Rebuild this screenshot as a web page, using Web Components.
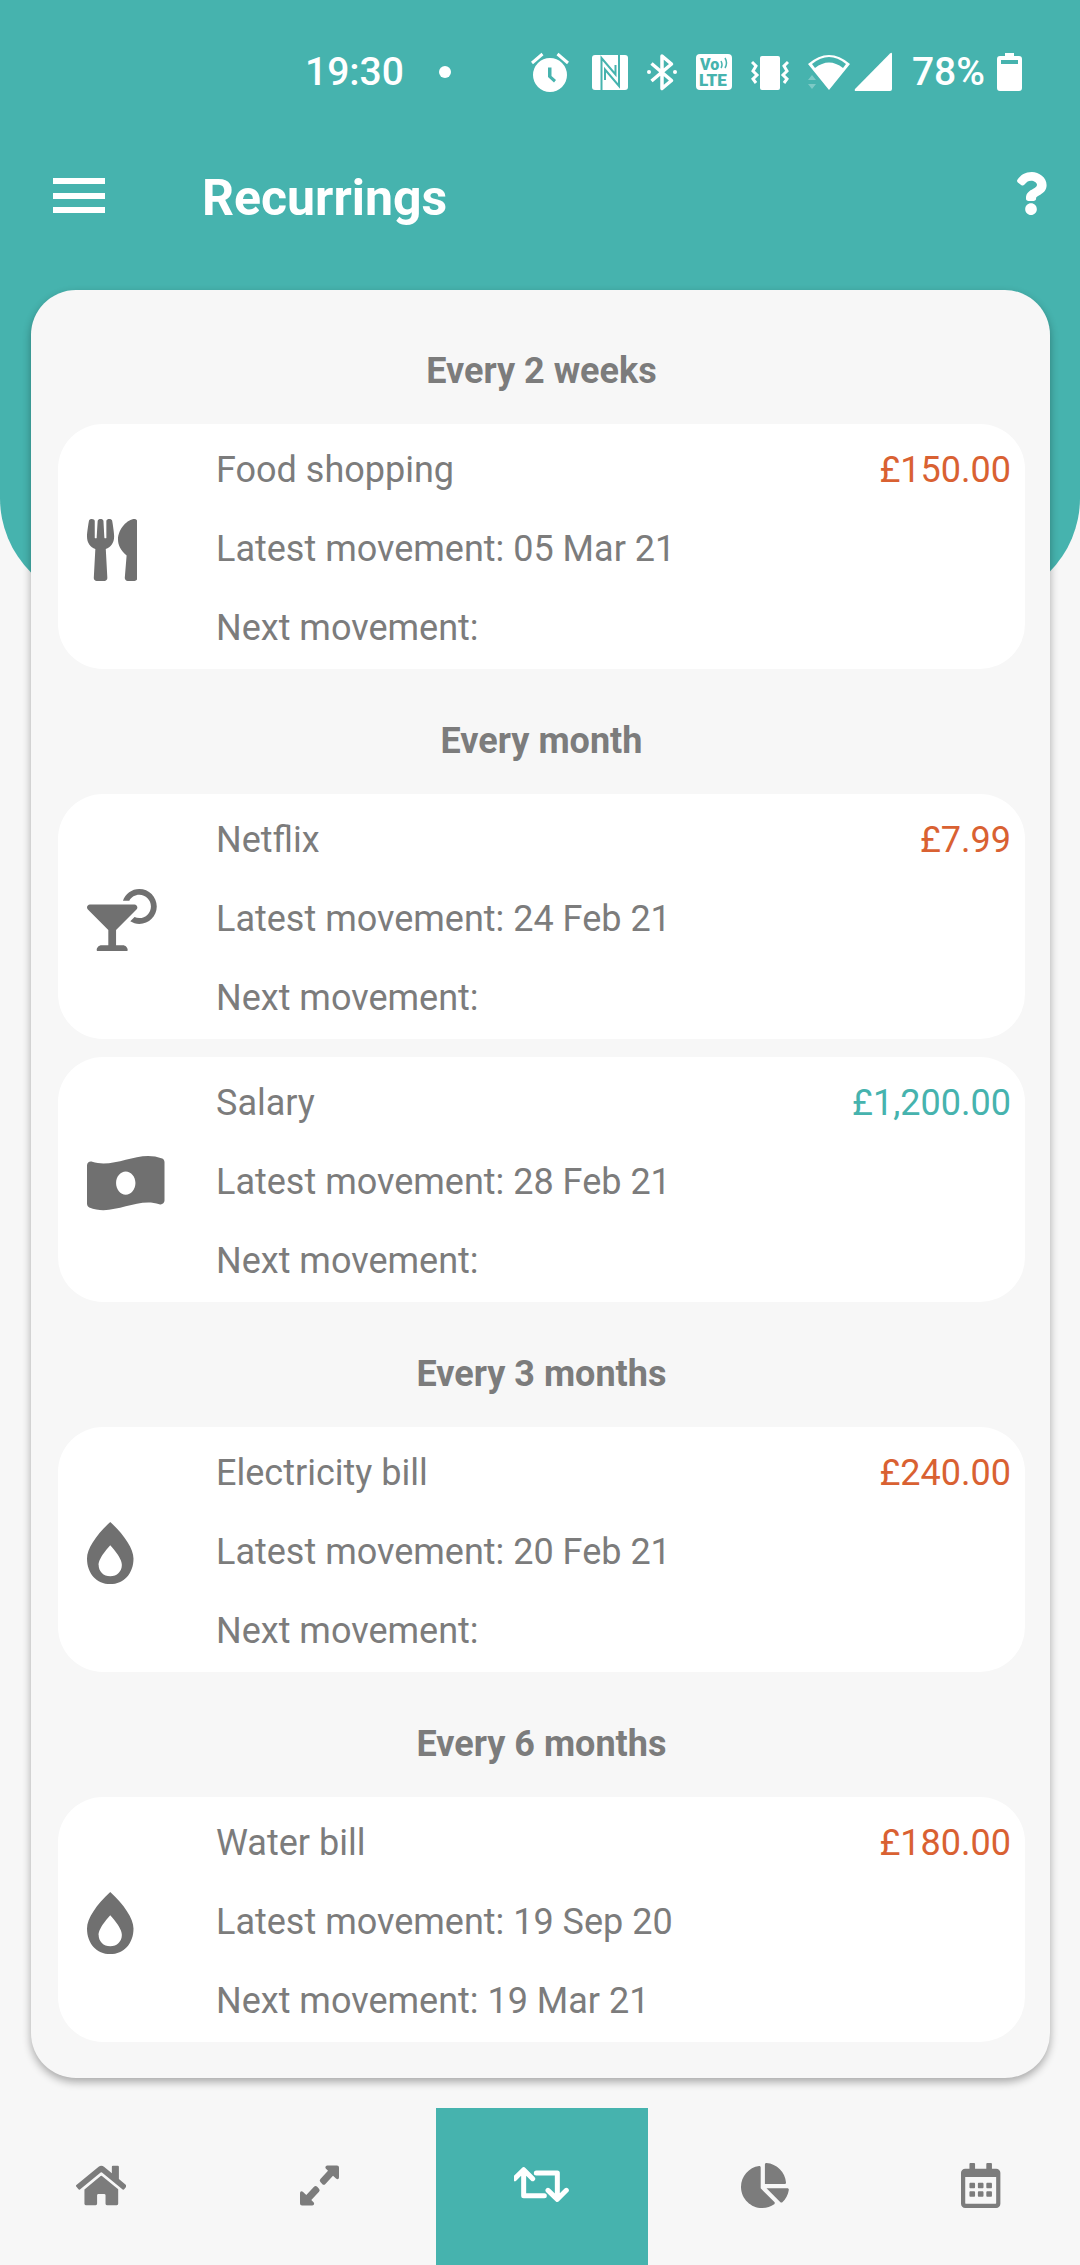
<!DOCTYPE html>
<html lang="en">
<head>
<meta charset="utf-8">
<meta name="viewport" content="width=device-width, initial-scale=1">
<title>Recurrings</title>
<style>
  :root {
    --teal: #46b3ae;
    --page: #f7f7f7;
    --ink: #7c7c7c;
    --glyph: #707070;
    --expense: #d96132;
  }
  body { margin: 0; background: var(--page); color: var(--ink); font: 36px/43px Roboto, "Liberation Sans", sans-serif; }
</style>
</head>
<body>
<app-shell>
  <status-bar slot="top" time="19:30" battery="78%"></status-bar>
  <app-header slot="top">Recurrings</app-header>
  <recurring-panel>
    <recurring-group heading="Every 2 weeks">
      <recurring-item icon="utensils" kind="expense" name="Food shopping" amount="£150.00" latest="05 Mar 21"></recurring-item>
    </recurring-group>
    <recurring-group heading="Every month">
      <recurring-item icon="cocktail" kind="expense" name="Netflix" amount="£7.99" latest="24 Feb 21"></recurring-item>
      <recurring-item icon="money" kind="income" name="Salary" amount="£1,200.00" latest="28 Feb 21"></recurring-item>
    </recurring-group>
    <recurring-group heading="Every 3 months">
      <recurring-item icon="burn" kind="expense" name="Electricity bill" amount="£240.00" latest="20 Feb 21"></recurring-item>
    </recurring-group>
    <recurring-group heading="Every 6 months">
      <recurring-item icon="burn" kind="expense" name="Water bill" amount="£180.00" latest="19 Sep 20" next="19 Mar 21"></recurring-item>
    </recurring-group>
  </recurring-panel>
  <bottom-nav slot="bottom"></bottom-nav>
</app-shell>

<script>
const define = (name, render) => customElements.define(name, class extends HTMLElement {
  constructor() { super(); this.attachShadow({ mode: 'open' }); }
  connectedCallback() { this.shadowRoot.innerHTML = render(this); }
});

/* Each glyph: viewBox, then its markup. Height comes from --icon-height. */
const GLYPHS = {
  utensils: ['0 0 416 512', '<path d="M207.9 15.2c.8 4.7 16.1 94.5 16.1 128.8 0 52.3-27.8 89.6-68.9 104.6L168 486.7c.7 13.7-10.2 25.3-24 25.3H80c-13.7 0-24.7-11.5-24-25.3l12.9-238.1C27.7 233.6 0 196.2 0 144 0 109.6 15.3 19.9 16.1 15.2 19.3-5.1 61.4-5.4 64 16.3v141.2c1.3 3.4 15.1 3.2 16 0 1.4-25.3 7.9-139.2 8-141.8 3.3-20.8 44.7-20.8 47.9 0 .2 2.7 6.6 116.5 8 141.8.9 3.2 14.8 3.4 16 0V16.3c2.6-21.6 44.8-21.4 48-1.1zm119.2 285.7l-15 185.1c-1.2 14 9.9 26 23.9 26h56c13.3 0 24-10.7 24-24V24c0-13.2-10.7-24-24-24-82.5 0-221.4 178.5-64.9 300.9z"/>'],
  cocktail: ['0 0 576 512', '<path d="M296 464h-56V338.78l168.74-168.73c15.52-15.52 4.53-42.05-17.42-42.05H24.68c-21.95 0-32.94 26.53-17.42 42.05L176 338.78V464h-56c-22.09 0-40 17.91-40 40 0 4.42 3.58 8 8 8h240c4.42 0 8-3.58 8-8 0-22.09-17.91-40-40-40zM432 0c-62.61 0-115.35 40.2-135.18 96h52.54c16.65-28.55 47.27-48 82.64-48 52.93 0 96 43.06 96 96s-43.07 96-96 96c-14.04 0-27.29-3.2-39.32-8.64l-35.26 35.26C379.23 279.92 404.59 288 432 288c79.53 0 144-64.47 144-144S511.53 0 432 0z"/>'],
  money: ['0 0 640 512', '<path d="M621.16 54.46C582.37 38.19 543.55 32 504.75 32c-123.17-.01-246.33 62.34-369.5 62.34-30.89 0-61.76-3.92-92.65-13.72-3.47-1.1-6.95-1.62-10.35-1.62C15.04 79 0 92.32 0 110.81v317.26c0 12.63 7.23 24.6 18.84 29.46C57.63 473.81 96.45 480 135.25 480c123.17 0 246.34-62.35 369.51-62.35 30.89 0 61.76 3.92 92.65 13.72 3.47 1.1 6.95 1.62 10.35 1.62 17.21 0 32.25-13.32 32.25-31.81V83.93c-.01-12.64-7.24-24.6-18.85-29.47zM320 352c-44.19 0-80-42.99-80-96 0-53.02 35.82-96 80-96s80 42.98 80 96c0 53.03-35.83 96-80 96z"/>'],
  burn: ['0 0 384 512', '<path d="M192 0C79.7 101.3 0 220.9 0 300.5 0 425 79 512 192 512s192-87 192-211.5c0-79.9-80.2-199.6-192-300.5zm0 448c-56.5 0-96-39-96-94.8 0-13.5 4.6-61.5 96-161.2 91.5 99.7 96 147.7 96 161.2 0 55.8-39.5 94.8-96 94.8z"/>'],
  question: ['25 0 354 512', '<path d="M202.021 0C122.202 0 70.503 32.703 29.914 91.026c-7.363 10.58-5.093 25.086 5.178 32.874l43.138 32.709c10.373 7.865 25.132 6.026 33.253-4.148 25.049-31.381 43.63-49.449 82.757-49.449 30.764 0 68.816 19.799 68.816 49.631 0 22.552-18.617 34.134-48.993 51.164-35.423 19.86-82.299 44.576-82.299 106.405V320c0 13.255 10.745 24 24 24h72.471c13.255 0 24-10.745 24-24v-5.773c0-42.86 125.268-44.645 125.268-160.627C377.504 66.256 286.902 0 202.021 0zM192 373.459c-38.196 0-69.271 31.075-69.271 69.271 0 38.195 31.075 69.27 69.271 69.27s69.271-31.075 69.271-69.27-31.075-69.271-69.271-69.271z"/>'],
  menu: ['0 0 52 46', '<path d="M0 5h52v6H0zM0 20h52v6H0zM0 34h52v6H0z"/>'],
  home: ['0 0 576 512', '<path d="M280.37 148.26L96 300.11V464a16 16 0 0 0 16 16l112.06-.29a16 16 0 0 0 15.92-16V368a16 16 0 0 1 16-16h64a16 16 0 0 1 16 16v95.64a16 16 0 0 0 16 16.05L464 480a16 16 0 0 0 16-16V300L295.67 148.26a12.19 12.19 0 0 0-15.3 0zM571.6 251.47L488 182.56V44.05a12 12 0 0 0-12-12h-56a12 12 0 0 0-12 12v72.61L318.47 43a48 48 0 0 0-61 0L4.34 251.47a12 12 0 0 0-1.6 16.9l25.5 31A12 12 0 0 0 45.15 301l235.22-193.74a12.19 12.19 0 0 1 15.3 0L530.9 301a12 12 0 0 0 16.9-1.6l25.5-31a12 12 0 0 0-1.7-16.93z"/>'],
  expand: ['0 0 39 45', '<path d="M28 2.500h9a2 2 0 0 1 2 2v9.500c0 2.200-1.500 2.900-3 1.500l-3-2.800-7.600 8.300a2.200 2.200 0 0 1-3.200 0l-1.800-2a2.200 2.200 0 0 1 0-3L28 7.800l-2-2c-1.300-1.400-.400-3.300 2-3.300zM11.500 42.500H2a2 2 0 0 1-2-2v-10c0-2.200 1.700-2.800 3.100-1.500L6.300 32l7.700-8.200a2.200 2.200 0 0 1 3.200 0l1.800 2a2.200 2.200 0 0 1 0 3L11.300 37l2.200 2.200c1.400 1.500.4 3.300-2 3.300z"/>'],
  repeat: ['26 27 168 135', '<path fill="none" stroke="currentColor" stroke-width="15" stroke-linecap="round" stroke-linejoin="round" d="M28 74l27-27 27 27M55 50v75h62M93 57h63v77M128 109l28 27 27-27"/>'],
  pie: ['0 0 544 512', '<path d="M527.79 288H290.5l158.03 158.03c6.04 6.04 15.98 6.53 22.19.68 38.7-36.46 65.32-85.61 73.13-140.86 1.34-9.46-6.51-17.85-16.06-17.85zm-15.83-64.8C503.72 103.74 408.26 8.28 288.8.04 279.68-.59 272 7.1 272 16.24V240h223.77c9.14 0 16.82-7.68 16.19-16.8zM224 288V50.71c0-9.55-8.39-17.4-17.84-16.06C86.99 51.49-4.1 155.6.14 280.37 4.5 408.51 114.83 513.59 243.03 511.98c50.4-.63 96.97-16.87 135.26-44.03 7.9-5.6 8.42-17.23 1.57-24.08L224 288z"/>'],
  calendar: ['0 0 448 512', '<path d="M148 288h-40c-6.600 0-12-5.400-12-12v-40c0-6.600 5.400-12 12-12h40c6.600 0 12 5.400 12 12v40c0 6.600-5.400 12-12 12zm108-12v-40c0-6.600-5.400-12-12-12h-40c-6.600 0-12 5.400-12 12v40c0 6.600 5.400 12 12 12h40c6.600 0 12-5.400 12-12zm96 0v-40c0-6.600-5.400-12-12-12h-40c-6.600 0-12 5.400-12 12v40c0 6.600 5.400 12 12 12h40c6.600 0 12-5.400 12-12zm-96 96v-40c0-6.600-5.400-12-12-12h-40c-6.600 0-12 5.400-12 12v40c0 6.600 5.400 12 12 12h40c6.600 0 12-5.400 12-12zm-96 0v-40c0-6.600-5.400-12-12-12h-40c-6.600 0-12 5.400-12 12v40c0 6.600 5.400 12 12 12h40c6.600 0 12-5.400 12-12zm192 0v-40c0-6.600-5.400-12-12-12h-40c-6.600 0-12 5.400-12 12v40c0 6.600 5.400 12 12 12h40c6.600 0 12-5.400 12-12zm96-260v352c0 26.500-21.500 48-48 48H48c-26.500 0-48-21.500-48-48V112c0-26.500 21.500-48 48-48h48V12c0-6.600 5.400-12 12-12h40c6.600 0 12 5.400 12 12v52h128V12c0-6.600 5.400-12 12-12h40c6.600 0 12 5.400 12 12v52h48c26.500 0 48 21.500 48 48zm-48 346V160H48v298c0 3.300 2.700 6 6 6h340c3.300 0 6-2.700 6-6z"/>'],
  /* status glyphs are drawn in pixels on a 40px tall canvas */
  alarm: ['0 0 43 40', '<path fill-rule="evenodd" d="M20 6a17 17 0 1 1 0 34 17 17 0 0 1 0-34zm-2 9.500v9.500l6 5.500 2-2.500-4.500-4v-8.500z"/><path d="M2 11L12.500 2M38 11L27.500 2" stroke="currentColor" stroke-width="3"/>'],
  nfc: ['0 0 36 40', '<rect y="3" width="36" height="35" rx="3"/><path d="M9.500 38V6l14 16.500V13M27 3v31L13 17.500V28" fill="none" stroke="#46b3ae" stroke-width="2"/>'],
  bluetooth: ['0 0 30 40', '<path d="M4.500 11.500l20 17-9.500 8V4l9.500 8-20 17" fill="none" stroke="currentColor" stroke-width="3.500" stroke-linejoin="round"/><circle cx="2" cy="20" r="2"/><circle cx="28" cy="20" r="2"/>'],
  volte: ['0 0 36 40', '<rect y="2" width="36" height="36" rx="4"/><g fill="#46b3ae" font-family="Roboto, sans-serif" font-weight="900"><text x="4" y="18" font-size="16">Vo</text><text x="3" y="34" font-size="17">LTE</text></g><path d="M25 9q2 4 0 7M29 6q3 5 0 10" fill="none" stroke="#46b3ae" stroke-width="1.500"/>'],
  vibrate: ['0 0 38 40', '<rect x="9" y="4" width="20" height="34" rx="2"/><path d="M1 10l4 4-3 5 4 4-4 4 3 4M37 10l-4 4 3 5-4 4 4 4-3 4" fill="none" stroke="currentColor" stroke-width="3"/>'],
  wifi: ['0 0 42 40', '<path fill-rule="evenodd" d="M0 12q21-18 42 0L21 38zM4 12l3 4q14-11 28 0l3-4Q21-2 4 12z"/><path opacity=".3" d="M0 28h8l-4-5zM0 32h8l-4 5z"/>'],
  signal: ['0 0 39 40', '<path d="M36 1.500Q38 0 38 2v35q0 2-2 2H2q-2 0-1-2z"/>'],
  battery: ['0 0 25 40', '<path fill-rule="evenodd" d="M8 1h9v3h5a3 3 0 0 1 3 3v29a3 3 0 0 1-3 3H3a3 3 0 0 1-3-3V7a3 3 0 0 1 3-3h5zM4 8v4h17V8z"/>']
};

define('app-icon', el => {
  const [box, body] = GLYPHS[el.getAttribute('name')];
  return `<style>
    :host { display: block; flex: none; }
    svg { display: block; height: var(--icon-height, 40px); width: auto; fill: currentColor; }
  </style><svg viewBox="${box}" aria-hidden="true">${body}</svg>`;
});

define('app-shell', () => `<style>
    :host { display: flex; flex-direction: column; min-height: 100vh; }
    .top { background: var(--teal); color: #fff; padding-bottom: 355px; border-radius: 0 0 105px 105px; }
    main { flex: 1; margin: -313px 30px 30px 31px; display: flex; flex-direction: column; }
  </style>
  <div class="top"><slot name="top"></slot></div>
  <main><slot></slot></main>
  <slot name="bottom"></slot>`);

define('status-bar', el => `<style>
    :host { display: flex; align-items: center; height: 144px; padding: 0 58px 0 305px; font-size: 39px; font-weight: 500; }
    .dot { width: 12px; height: 12px; border-radius: 50%; background: currentColor; margin-left: 35px; }
    .icons { margin-left: auto; display: flex; align-items: center; gap: 19px; }
    .pair { display: flex; align-items: center; gap: 4px; }
    .power { display: flex; align-items: center; gap: 12px; }
  </style>
  <time>${el.getAttribute('time')}</time><span class="dot"></span>
  <div class="icons">
    <app-icon name="alarm"></app-icon><app-icon name="nfc"></app-icon><app-icon name="bluetooth"></app-icon>
    <app-icon name="volte"></app-icon><app-icon name="vibrate"></app-icon>
    <div class="pair"><app-icon name="wifi"></app-icon><app-icon name="signal"></app-icon></div>
    <div class="power"><span>${el.getAttribute('battery')}</span><app-icon name="battery"></app-icon></div>
  </div>`);

define('app-header', () => `<style>
    :host { display: flex; align-items: center; height: 104px; padding: 0 33px 0 53px; }
    button { border: 0; padding: 0; background: none; color: inherit; cursor: pointer; }
    h1 { flex: 1; margin: 0 0 0 97px; padding-top: 4px; font-size: 50px; line-height: 60px; font-weight: 700; }
    .menu { --icon-height: 46px; }
    .help { --icon-height: 43px; padding-bottom: 6px; }
  </style>
  <button class="menu" aria-label="Menu"><app-icon name="menu"></app-icon></button>
  <h1><slot></slot></h1>
  <button class="help" aria-label="Help"><app-icon name="question"></app-icon></button>`);

define('recurring-panel', () => `<style>
    :host { display: block; flex: 1; box-sizing: border-box; padding: 9px 25px 36px 27px; border-radius: 45px;
      background: var(--page); box-shadow: 0 4px 9px rgba(0, 0, 0, .32); }
  </style><slot></slot>`);

define('recurring-group', el => `<style>
    :host { display: block; }
    h2 { margin: 0; padding: 51px 0 31px; font-size: 36px; line-height: 43px; font-weight: 700; text-align: center; }
    .items { display: flex; flex-direction: column; gap: 18px; }
  </style>
  <section><h2>${el.getAttribute('heading')}</h2><div class="items"><slot></slot></div></section>`);

define('recurring-item', el => {
  const a = n => el.getAttribute(n) || '';
  return `<style>
    :host { display: block; }
    article { display: grid; grid-template-columns: 129px 1fr; align-items: center; padding: 7px 14px 1px 29px;
      border-radius: 45px; background: #fff; line-height: 79px; }
    app-icon { --icon-height: 62px; color: var(--glyph); }
    .first { display: flex; justify-content: space-between; }
    h3, p { margin: 0; font-size: 36px; font-weight: 400; }
    .expense { color: var(--expense); }
    .income { color: var(--teal); }
  </style>
  <article>
    <app-icon name="${a('icon')}"></app-icon>
    <div>
      <div class="first"><h3>${a('name')}</h3><span class="${a('kind')}">${a('amount')}</span></div>
      <p>Latest movement: ${a('latest')}</p>
      <p>Next movement: ${a('next')}</p>
    </div>
  </article>`;
});

define('bottom-nav', () => `<style>
    :host { display: block; --icon-height: 45px; }
    nav { display: grid; grid-template-columns: 202fr 212fr 212fr 212fr 198fr; gap: 11px; height: 157px; }
    a { display: flex; align-items: center; justify-content: center; padding-bottom: 2px; color: inherit; }
    a[aria-current] { background: var(--teal); color: #fff; }
  </style>
  <nav aria-label="Main">
    <a href="#home" aria-label="Home"><app-icon name="home"></app-icon></a>
    <a href="#movements" aria-label="Movements"><app-icon name="expand"></app-icon></a>
    <a href="#recurrings" aria-label="Recurrings" aria-current="page"><app-icon name="repeat"></app-icon></a>
    <a href="#charts" aria-label="Charts"><app-icon name="pie"></app-icon></a>
    <a href="#calendar" aria-label="Calendar"><app-icon name="calendar"></app-icon></a>
  </nav>`);
</script>
</body>
</html>
